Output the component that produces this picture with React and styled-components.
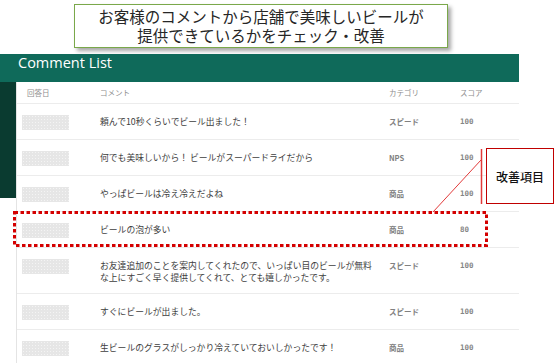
import React from 'react';
import styled, { createGlobalStyle } from 'styled-components';

const comments = [
  { text: '頼んで10秒くらいでビール出ました！', category: 'スピード', score: 100 },
  { text: '何でも美味しいから！ ビールがスーパードライだから', category: 'NPS', score: 100 },
  { text: 'やっぱビールは冷え冷えだよね', category: '商品', score: 100 },
  { text: 'ビールの泡が多い', category: '商品', score: 80 },
  {
    text: 'お友達追加のことを案内してくれたので、いっぱい目のビールが無料な上にすごく早く提供してくれて、とても嬉しかったです。',
    category: 'スピード',
    score: 100,
  },
  { text: 'すぐにビールが出ました。', category: 'スピード', score: 100 },
  { text: '生ビールのグラスがしっかり冷えていておいしかったです！', category: '商品', score: 100 },
];

const App = () => {
  return (
    <Page>
      <GlobalStyle />
      <Heading>
        <HeadingLine>お客様のコメントから店舗で美味しいビールが</HeadingLine>
        <HeadingLine>提供できているかをチェック・改善</HeadingLine>
      </Heading>

      <Panel>
        <TitleBar>Comment List</TitleBar>
        <Body>
          <Rail />
          <Table>
            <HeadRow>
              <HeadCell $indent>回答日</HeadCell>
              <HeadCell>コメント</HeadCell>
              <HeadCell>カテゴリ</HeadCell>
              <HeadCell>スコア</HeadCell>
            </HeadRow>
            {comments.map((c, i) => (
              <Row key={i}>
                <DateCell>
                  <Masked />
                </DateCell>
                <Comment>{c.text}</Comment>
                <Category>{c.category}</Category>
                <Score>{c.score}</Score>
              </Row>
            ))}
          </Table>
        </Body>
      </Panel>

      {/* callout marking the row to improve */}
      <Marks width="555" height="363" viewBox="0 0 555 363">
        <rect
          x="14.5"
          y="212.5"
          width="472"
          height="33"
          fill="none"
          stroke="#d40000"
          strokeWidth="3"
          strokeDasharray="3.5 2.5"
        />
        <line x1="481.5" y1="149" x2="481.5" y2="204" stroke="#e23a3a" strokeWidth="1.5" />
        <line x1="481" y1="160" x2="433" y2="212" stroke="#e23a3a" strokeWidth="1" />
      </Marks>
      <Label>改善項目</Label>
    </Page>
  );
};

export default App;

const GlobalStyle = createGlobalStyle`
  html, body {
    margin: 0;
    padding: 0;
    background: #ffffff;
  }
  body {
    font-family: "Noto Sans CJK JP", "Noto Sans", sans-serif;
    overflow: hidden;
  }
`;

const Page = styled.div`
  position: relative;
  width: 555px;
  height: 363px;
  padding-top: 4px;
  box-sizing: border-box;
`;

const Heading = styled.div`
  box-sizing: border-box;
  margin-left: 74px;
  width: 374px;
  height: 44px;
  border: 1px solid #7aa84a;
  box-shadow: 3px 3px 4px rgba(0, 0, 0, 0.35);
  background: #ffffff;
  display: flex;
  flex-direction: column;
  align-items: center;
  justify-content: center;
  color: #262626;
`;

const HeadingLine = styled.div`
  font-size: 15.5px;
  line-height: 19px;
  height: 19px;
  overflow: visible;
  white-space: nowrap;
`;

const Panel = styled.div`
  margin-top: 6px;
  width: 519px;
`;

const TitleBar = styled.div`
  height: 28px;
  box-sizing: border-box;
  padding-left: 18px;
  padding-top: 1px;
  background: #0f6a5a;
  color: #ffffff;
  font-family: "Open Sans", "Noto Sans", sans-serif;
  font-size: 14.5px;
  line-height: 16px;
`;

const Body = styled.div`
  display: flex;
  align-items: flex-start;
`;

const Rail = styled.div`
  width: 16px;
  height: 116px;
  flex-shrink: 0;
  background: #0a3b30;
`;

const Table = styled.div`
  flex: 1;
  border-left: 1px solid #e4e4e4;
`;

const columns = '83px 289px 71px 1fr';

const HeadRow = styled.div`
  display: grid;
  grid-template-columns: ${columns};
  align-items: center;
  height: 22px;
  box-sizing: border-box;
  border-bottom: 1px solid #ececec;
`;

const HeadCell = styled.div`
  font-size: 7.5px;
  color: #8e8e8e;
  padding-left: ${p => (p.$indent ? '10px' : '0')};
`;

const Row = styled.div`
  display: grid;
  grid-template-columns: ${columns};
  align-items: start;
  min-height: 36px;
  box-sizing: border-box;
  padding: 12px 0 9px;
  border-bottom: 1px solid #ececec;
  line-height: 12px;
`;

const DateCell = styled.div`
  padding-left: 5px;
`;

const Masked = styled.div`
  width: 47px;
  height: 15px;
  margin-top: -1.5px;
  background-color: #e6e6e6;
  background-image: radial-gradient(rgba(255, 255, 255, 0.55) 0.6px, transparent 0.9px);
  background-size: 3px 3px;
`;

const Comment = styled.div`
  padding-right: 12px;
  font-size: 8.8px;
  color: #3e3e3e;
`;

const Category = styled.div`
  font-size: 7.5px;
  font-weight: 700;
  color: #808080;
`;

const Score = styled.div`
  font-family: "DejaVu Sans Mono", "Liberation Mono", monospace;
  font-size: 7.5px;
  font-weight: 700;
  color: #858585;
`;

const Marks = styled.svg`
  position: absolute;
  left: 0;
  top: 0;
  pointer-events: none;
`;

const Label = styled.div`
  position: absolute;
  left: 486px;
  top: 148px;
  width: 68px;
  height: 56px;
  box-sizing: border-box;
  border: 1.5px solid #c00000;
  background: #ffffff;
  display: flex;
  align-items: center;
  justify-content: center;
  font-size: 12px;
  font-weight: 500;
  color: #111111;
`;
